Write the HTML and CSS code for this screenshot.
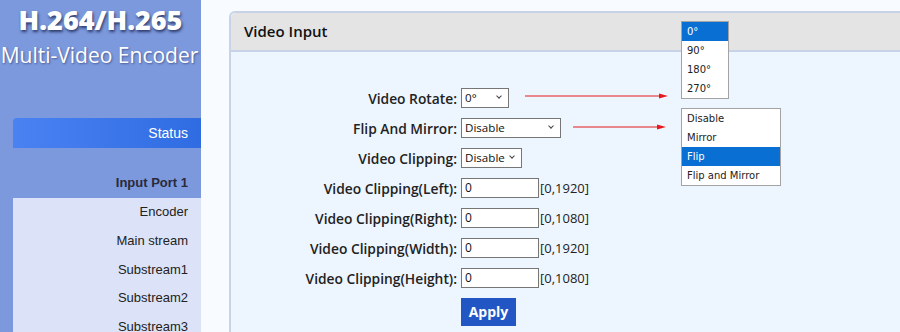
FILE: index.html
```html
<!DOCTYPE html>
<html lang="en">

<head>
    <meta charset="utf-8" />
    <title>Video Input</title>
    <link rel="stylesheet" href="styles.css">
</head>

<body>
    <aside class="sidebar">
        <div class="brand">
            <div class="brand-top">H.264/H.265</div>
            <div class="brand-sub">Multi-Video Encoder</div>
        </div>
        <div class="nav-status">Status</div>
        <div class="nav-group">Input Port 1</div>
        <ul class="nav-list">
            <li>Encoder</li>
            <li>Main stream</li>
            <li>Substream1</li>
            <li>Substream2</li>
            <li>Substream3</li>
        </ul>
    </aside>

    <main class="content">
        <div class="panel">
            <div class="panel-head">Video Input</div>
            <div class="panel-body">
                <form class="form">
                    <label>Video Rotate:</label>
                    <div class="field"><span class="select sel-rotate">0°<i class="caret"></i></span></div>

                    <label>Flip And Mirror:</label>
                    <div class="field"><span class="select sel-flip">Disable<i class="caret"></i></span></div>

                    <label>Video Clipping:</label>
                    <div class="field"><span class="select sel-clip">Disable<i class="caret"></i></span></div>

                    <label>Video Clipping(Left):</label>
                    <div class="field"><span class="input">0</span><span class="range">[0,1920]</span></div>

                    <label>Video Clipping(Right):</label>
                    <div class="field"><span class="input">0</span><span class="range">[0,1080]</span></div>

                    <label>Video Clipping(Width):</label>
                    <div class="field"><span class="input">0</span><span class="range">[0,1920]</span></div>

                    <label>Video Clipping(Height):</label>
                    <div class="field"><span class="input">0</span><span class="range">[0,1080]</span></div>

                    <span></span>
                    <div class="field"><span class="btn">Apply</span></div>
                </form>
            </div>
        </div>
    </main>

    <!-- annotation: open dropdowns + arrows -->
    <ul class="popup popup-rotate">
        <li class="on">0°</li>
        <li>90°</li>
        <li>180°</li>
        <li>270°</li>
    </ul>
    <ul class="popup popup-flip">
        <li>Disable</li>
        <li>Mirror</li>
        <li class="on">Flip</li>
        <li>Flip and Mirror</li>
    </ul>
    <svg class="arrows" width="900" height="332" viewBox="0 0 900 332">
        <line x1="525" y1="96" x2="662" y2="96" stroke="#e31b1b" stroke-width="1.2" />
        <polygon points="668,96 659,93.5 659,98.5" fill="#e31b1b" />
        <line x1="573" y1="127" x2="660" y2="127" stroke="#e31b1b" stroke-width="1.2" />
        <polygon points="666,127 657,124.5 657,129.5" fill="#e31b1b" />
    </svg>
</body>

</html>
```

FILE: styles.css
```css
body {
    margin: 0;
    display: flex;
    height: 332px;
    overflow: hidden;
    background-color: #f8fbff;
    font-family: "Liberation Sans", Arial, sans-serif;
    color: #222;
}

.sidebar {
    width: 201px;
    flex: none;
    height: 332px;
    overflow: hidden;
    background-color: #7c99dd;
    display: flex;
    flex-direction: column;
}

.sidebar > * {
    flex: none;
}

.brand {
    height: 118px;
    color: white;
    text-align: center;
    font-family: "Open Sans", sans-serif;
    white-space: nowrap;
    overflow: hidden;
}

.brand-top {
    margin-top: 3px;
    font-size: 27px;
    font-weight: 800;
    line-height: 34px;
    text-shadow: 1px 2px 3px #2b3a6a;
}

.brand-sub {
    margin-top: 2px;
    font-size: 21px;
    line-height: 32px;
    margin-left: -2px;
    text-shadow: 1px 1px 2px #4b5c95;
}

.nav-status {
    margin-left: 13px;
    height: 30px;
    line-height: 30px;
    padding-right: 13px;
    text-align: right;
    font-size: 14px;
    color: white;
    background: linear-gradient(90deg, #4a82f2, #2f6ce2);
    border-radius: 4px 0 0 0;
}

.nav-group {
    margin-left: 13px;
    height: 50px;
    padding-right: 13px;
    line-height: 70px;
    text-align: right;
    font-size: 13px;
    font-weight: bold;
    color: #2a2a3a;
}

.nav-list {
    list-style: none;
    margin: 0 0 0 13px;
    padding: 0;
    height: 134px;
    background-color: #dce2f7;
}

.nav-list li {
    height: 28.8px;
    line-height: 28.8px;
    padding-right: 13px;
    text-align: right;
    font-size: 13px;
}

.content {
    flex: 1;
    padding: 11px 0 0 28px;
}

.panel {
    height: 100%;
    box-sizing: border-box;
    border: 2px solid #c9d3e7;
    border-right: none;
    border-bottom: none;
    border-radius: 6px 0 0 0;
    background-color: #edf5ff;
    font-family: "Open Sans", sans-serif;
}

.panel-head {
    height: 37px;
    line-height: 37px;
    padding-left: 13px;
    font-size: 15px;
    font-weight: 600;
    color: #111;
    background-color: #e4e4e4;
    border-bottom: 2px solid #c9d3e7;
    border-radius: 5px 0 0 0;
}

.panel-body {
    padding-top: 31px;
}

.form {
    display: grid;
    grid-template-columns: 226px auto;
    grid-auto-rows: 30px;
    column-gap: 4px;
    align-items: center;
}

.form label {
    text-align: right;
    font-size: 13.8px;
    font-weight: 600;
    color: #222;
    white-space: nowrap;
}

.field {
    display: flex;
    align-items: center;
}

.select,
.input {
    box-sizing: border-box;
    height: 20px;
    border: 1px solid #767676;
    background-color: white;
    font-size: 12px;
    line-height: 18px;
    padding-left: 3px;
    color: #111;
    position: relative;
}

.select {
    font-size: 11.6px;
}

.sel-rotate {
    width: 48px;
}

.sel-flip {
    width: 100px;
}

.sel-clip {
    width: 61px;
}

.caret {
    position: absolute;
    right: 7px;
    top: 5px;
    width: 3px;
    height: 3px;
    border-right: 1px solid #444;
    border-bottom: 1px solid #444;
    transform: rotate(45deg);
}

.input {
    width: 78px;
}

.range {
    font-size: 13px;
    margin-left: 1px;
    color: #222;
}

.btn {
    margin-top: 8px;
    width: 55px;
    height: 28px;
    line-height: 28px;
    text-align: center;
    background-color: #2256c5;
    color: white;
    font-size: 14px;
    font-weight: 700;
}

.popup {
    position: absolute;
    list-style: none;
    margin: 0;
    padding: 0;
    background-color: white;
    border: 1px solid #a3a3a3;
    font-family: "DejaVu Sans", Verdana, sans-serif;
    font-size: 10px;
    color: #222;
}

.popup li {
    height: 19px;
    line-height: 19px;
    padding-left: 5px;
}

.popup li.on {
    background-color: #0a6fd2;
    color: white;
}

.popup-rotate {
    left: 681px;
    top: 21px;
    width: 46px;
}

.popup-flip {
    left: 681px;
    top: 108px;
    width: 98px;
}

.arrows {
    position: absolute;
    left: 0;
    top: 0;
    pointer-events: none;
}
```
